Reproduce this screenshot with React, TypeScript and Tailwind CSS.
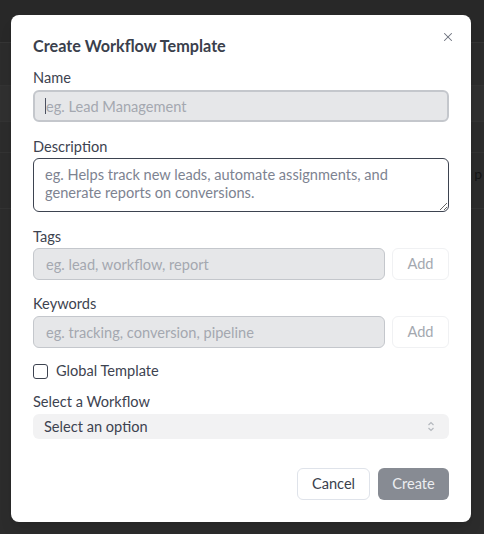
import { X } from "lucide-react";

const font = { fontFamily: "Lato, 'Open Sans', sans-serif" };

function Label({ children, className = "" }: { children: React.ReactNode; className?: string }) {
  return <label className={`block text-[14.6px] leading-[20px] text-[#3d4350] ${className}`}>{children}</label>;
}

function AddField({ placeholder, className = "" }: { placeholder: string; className?: string }) {
  return (
    <div className={`flex gap-[7px] ${className}`}>
      <input
        disabled
        placeholder={placeholder}
        className="h-[32px] flex-1 rounded-[6px] border border-[#c4c7cc] bg-[#e6e7e9] px-[12px] text-[14.6px] placeholder:text-[#a4a8b0]"
      />
      <button className="h-[32px] w-[57px] rounded-[6px] border border-[#f0f1f3] bg-white text-[14.6px] text-[#a4a8b0]">
        Add
      </button>
    </div>
  );
}

export default function App() {
  return (
    <div className="relative h-[534px] w-[484px] overflow-hidden bg-[#2c2c2c]" style={font}>
      {/* page behind overlay */}
      <div className="flex flex-col">
        <div className="h-[43px] border-b border-[#353535] bg-[#282828]" />
        <div className="h-[43px] border-b border-[#333333]" />
        <div className="h-[36px] border-b border-[#333333] bg-[#303030]" />
        <div className="flex h-[31px] border-b border-[#333333]" />
        <div className="flex h-[56px] items-center justify-end border-b border-[#333333] pr-[2px] text-[14px] text-[#151515]">
          <span className="-translate-y-[7px]">s p</span>
        </div>
      </div>

      {/* modal */}
      <div className="absolute left-[11px] top-[15px] flex h-[507px] w-[460px] flex-col rounded-[8px] bg-white px-[22px] pt-[22px] shadow-lg">
        <button className="absolute right-[16px] top-[15px] text-[#6c717d]">
          <X size={14} strokeWidth={1.8} />
        </button>
        <h2 className="text-[16.2px] font-bold leading-[18px] text-[#3a404c]">Create Workflow Template</h2>

        <Label className="mt-[13px]">Name</Label>
        <div className="relative mt-[2px]">
          <input
            disabled
            placeholder="eg. Lead Management"
            className="h-[32px] w-full rounded-[6px] border-2 border-[#c4c7cc] bg-[#e6e7e9] px-[11px] text-[14.6px] placeholder:text-[#a4a8b0]"
          />
          <span className="absolute left-[12px] top-[8px] h-[16px] w-px bg-[#4b5060]" />
        </div>

        <Label className="mt-[15px]">Description</Label>
        <textarea
          placeholder="eg. Helps track new leads, automate assignments, and generate reports on conversions."
          className="mt-px h-[54px] w-full resize-y rounded-[6px] border border-[#3d4350] px-[11px] py-[7px] text-[14.6px] leading-[18px] outline-none placeholder:text-[#7d8391]"
        />

        <Label className="mt-[15px]">Tags</Label>
        <AddField className="mt-px" placeholder="eg. lead, workflow, report" />

        <Label className="mt-[14px]">Keywords</Label>
        <AddField className="mt-[2px]" placeholder="eg. tracking, conversion, pipeline" />

        <label className="mt-[13px] flex items-center gap-[8px] text-[14.6px] leading-[20px] text-[#3d4350]">
          <span className="h-[15px] w-[15px] rounded-[3px] border-[1.5px] border-[#3d4350]" />
          Global Template
        </label>

        <Label className="mt-[11px]">Select a Workflow</Label>
        <div className="mt-[2px] flex h-[25px] items-center justify-between rounded-[6px] bg-[#f2f2f3] pl-[11px] pr-[14px] text-[14.6px] text-[#3d4350]">
          <span>Select an option</span>
          <svg width="8" height="11" viewBox="0 0 8 11" fill="none" stroke="#b4b8be" strokeWidth="1.2">
            <path d="M1.5 4 L4 1.5 L6.5 4" />
            <path d="M1.5 7 L4 9.5 L6.5 7" />
          </svg>
        </div>

        <div className="mt-[29px] flex justify-end gap-[8px]">
          <button className="h-[32px] w-[73px] rounded-[6px] border border-[#dfe3ea] bg-white text-[14.6px] text-[#3a404c]">
            Cancel
          </button>
          <button className="h-[32px] w-[71px] rounded-[6px] bg-[#878b93] text-[14.6px] text-[#eceef1]">
            Create
          </button>
        </div>
      </div>
    </div>
  );
}
